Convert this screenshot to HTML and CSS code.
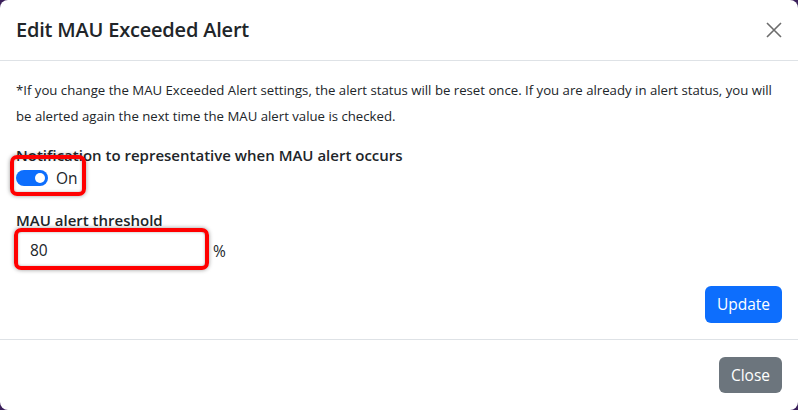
FILE: index.html
```html
<!DOCTYPE html>
<html lang="en">
<head>
<meta charset="utf-8">
<title>Edit MAU Exceeded Alert</title>
<link rel="stylesheet" href="styles.css">
</head>
<body>
<div class="modal">
  <div class="modal-header">
    <h5 class="modal-title">Edit MAU Exceeded Alert</h5>
    <button class="btn-close" aria-label="Close">
      <svg width="16" height="16" viewBox="0 0 16 16"><path d="M1 1L15 15M15 1L1 15" stroke="#6c6c6c" stroke-width="1.6" fill="none"/></svg>
    </button>
  </div>
  <div class="modal-body">
    <p class="note">*If you change the MAU Exceeded Alert settings, the alert status will be reset once. If you are already in alert status, you will be alerted again the next time the MAU alert value is checked.</p>
    <div class="field">
      <label class="field-label">Notification to representative when MAU alert occurs</label>
      <div class="switch-row">
        <span class="highlight hl-switch"></span>
        <span class="switch"><span class="knob"></span></span>
        <span class="switch-label">On</span>
      </div>
    </div>
    <div class="field">
      <label class="field-label">MAU alert threshold</label>
      <div class="input-row">
        <div class="input-wrap">
          <span class="highlight hl-input"></span>
          <input class="form-control" type="text" value="80">
        </div>
        <span class="unit">%</span>
      </div>
    </div>
    <div class="actions">
      <button class="btn btn-primary">Update</button>
    </div>
  </div>
  <div class="modal-footer">
    <button class="btn btn-secondary">Close</button>
  </div>
</div>
</body>
</html>
```
FILE: styles.css
```css
* { box-sizing: border-box; }
html, body { margin: 0; padding: 0; }
body {
  background: #3a1f5a;
  font-family: "Open Sans", "Noto Sans", sans-serif;
  color: #212529;
  width: 798px;
  height: 410px;
  overflow: hidden;
}
.modal {
  background: #fff;
  border-radius: 8px;
  height: 410px;
  width: 798px;
  display: flex;
  flex-direction: column;
}
.modal-header {
  height: 63px;
  border-bottom: 1px solid #dee2e6;
  display: flex;
  align-items: center;
  justify-content: space-between;
  padding: 0 16px;
}
.modal-title {
  margin: 0;
  font-size: 20px;
  font-weight: 600;
  line-height: 30px;
  letter-spacing: -0.2px;
}
.btn-close {
  border: 0;
  background: transparent;
  padding: 0;
  width: 16px;
  height: 16px;
  display: flex;
  cursor: pointer;
}
.modal-body {
  padding: 16px 16px 16px;
}
.note {
  margin: 0;
  font-size: 13.2px;
  line-height: 26px;
}
.field { margin-top: 15px; }
.field + .field { margin-top: 19px; }
.field-label {
  display: block;
  font-size: 15px;
  font-weight: 600;
  line-height: 22px;
}
.switch-row {
  position: relative;
  display: flex;
  align-items: center;
  gap: 8px;
  height: 24px;
  width: 70px;
}
.switch {
  width: 32px;
  height: 16px;
  border-radius: 8px;
  background: #0d6efd;
  position: relative;
  display: inline-block;
}
.knob {
  position: absolute;
  right: 3px;
  top: 3px;
  width: 10px;
  height: 10px;
  border-radius: 50%;
  background: #fff;
}
.switch-label {
  font-size: 15.5px;
  line-height: 24px;
}
.highlight {
  position: absolute;
  border: 4px solid #ff0000;
  border-radius: 7px;
  box-shadow: 0 0 4px rgba(0,0,0,0.4), inset 0 0 3px rgba(0,0,0,0.3);
  pointer-events: none;
}
.hl-switch { left: -6px; top: -11px; width: 76px; height: 41px; }
.input-row {
  display: flex;
  align-items: center;
  gap: 7px;
  margin-top: 0;
}
.input-wrap { position: relative; }
.hl-input { left: -2px; top: -3px; width: 195px; height: 42px; z-index: 1; }
.form-control {
  display: block;
  width: 190px;
  height: 37px;
  border: 1px solid #dee2e6;
  border-radius: 6px;
  padding: 0 12px 0 13px;
  font-family: inherit;
  font-size: 15.5px;
  color: #212529;
  background: #fff;
}
.unit {
  font-size: 15.5px;
  color: #212529;
  margin-top: 3px;
}
.actions {
  display: flex;
  justify-content: flex-end;
  margin-top: 18px;
}
.btn {
  font-family: inherit;
  font-size: 15.5px;
  line-height: 23px;
  border: 0;
  border-radius: 6px;
  color: #fff;
  padding: 0 12px;
  cursor: pointer;
}
.btn-primary { background: #0d6efd; height: 37px; }
.btn-secondary { background: #6c757d; height: 36px; }
.modal-footer {
  border-top: 1px solid #dee2e6;
  margin-top: auto;
  display: flex;
  justify-content: flex-end;
  padding: 17px 16px 17px;
}
```
